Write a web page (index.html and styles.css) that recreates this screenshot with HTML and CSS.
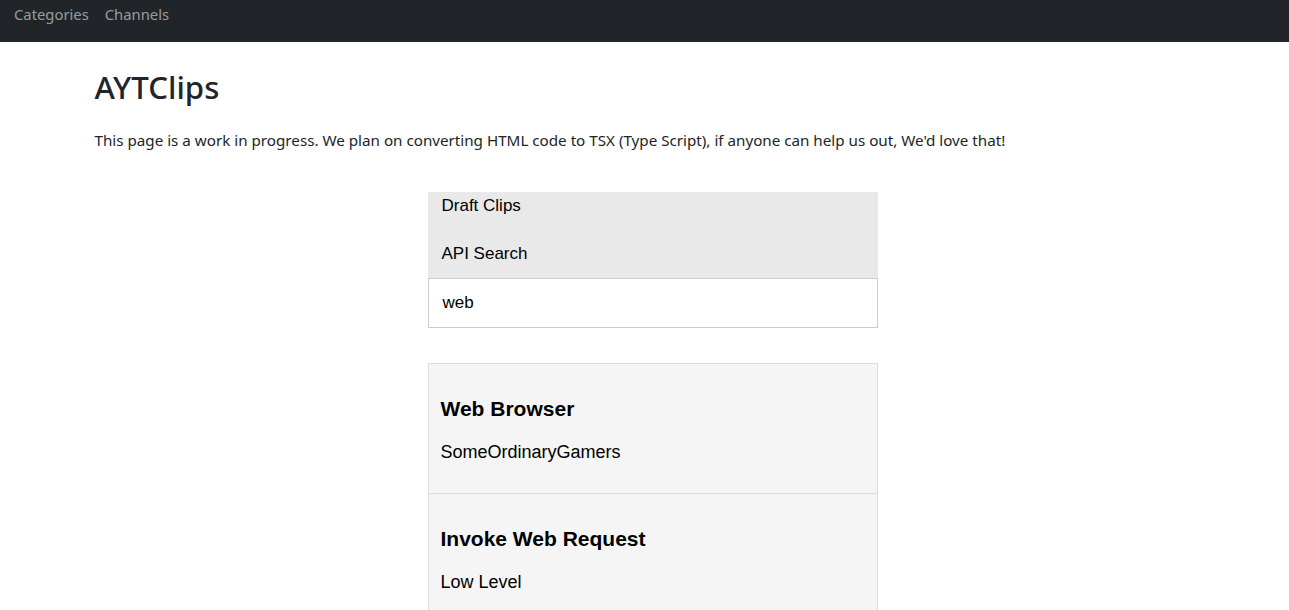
FILE: index.html
```html
<!DOCTYPE html>
<html lang="en">
<head>
<meta charset="utf-8">
<title>AYTClips</title>
<link rel="stylesheet" href="styles.css">
</head>
<body>
<nav class="navbar">
  <a class="nav-link" href="#">Categories</a>
  <a class="nav-link" href="#">Channels</a>
</nav>
<main class="container">
  <h1 class="title">AYTClips</h1>
  <p class="intro">This page is a work in progress. We plan on converting HTML code to TSX (Type Script), if anyone can help us out, We'd love that!</p>
  <section class="panel">
    <div class="menu">
      <div class="menu-item first">Draft Clips</div>
      <div class="menu-item">API Search</div>
    </div>
    <div class="search">web</div>
    <div class="results">
      <div class="result">
        <h3 class="result-title">Web Browser</h3>
        <div class="result-sub">SomeOrdinaryGamers</div>
      </div>
      <div class="result">
        <h3 class="result-title">Invoke Web Request</h3>
        <div class="result-sub">Low Level</div>
      </div>
    </div>
  </section>
</main>
</body>
</html>
```

FILE: styles.css
```css
html, body {
  margin: 0;
  padding: 0;
  background: #fff;
}
body {
  font-family: "Noto Sans", "Open Sans", sans-serif;
  color: #212529;
  font-size: 16px;
}
.navbar {
  height: 42px;
  background: #212529;
  display: flex;
  align-items: flex-start;
  gap: 16px;
  padding: 0 14px;
}
.nav-link {
  color: rgba(255, 255, 255, 0.55);
  text-decoration: none;
  font-size: 14.8px;
  line-height: 28px;
}
.container {
  width: 1100px;
  margin: 0 auto;
}
.title {
  margin: 25px 0 0;
  font-size: 31.2px;
  font-weight: 500;
  line-height: 40px;
}
.intro {
  margin: 21px 0 0;
  line-height: 24px;
  font-size: 15.2px;
}
.panel {
  width: 450px;
  margin: 40px 0 0 333px;
  font-family: "Liberation Sans", Arial, sans-serif;
  color: #000;
}
.menu {
  background: #e9e9e9;
  height: 86px;
  overflow: hidden;
}
.menu-item {
  font-size: 17px;
  line-height: 48px;
  padding-left: 14px;
}
.menu-item.first {
  margin-top: -10px;
}
.search {
  border: 1px solid #ccc;
  height: 48px;
  line-height: 48px;
  font-size: 17px;
  padding-left: 14px;
  background: #fff;
}
.results {
  margin-top: 35px;
  border: 1px solid #ddd;
  background: #f5f5f5;
}
.result {
  height: 129px;
  padding: 0 12px;
  border-bottom: 1px solid #ddd;
}
.result-title {
  margin: 0;
  padding-top: 31px;
  font-size: 21px;
  line-height: 28px;
  font-weight: bold;
}
.result-sub {
  margin-top: 17px;
  font-size: 18px;
  line-height: 24px;
}
```
